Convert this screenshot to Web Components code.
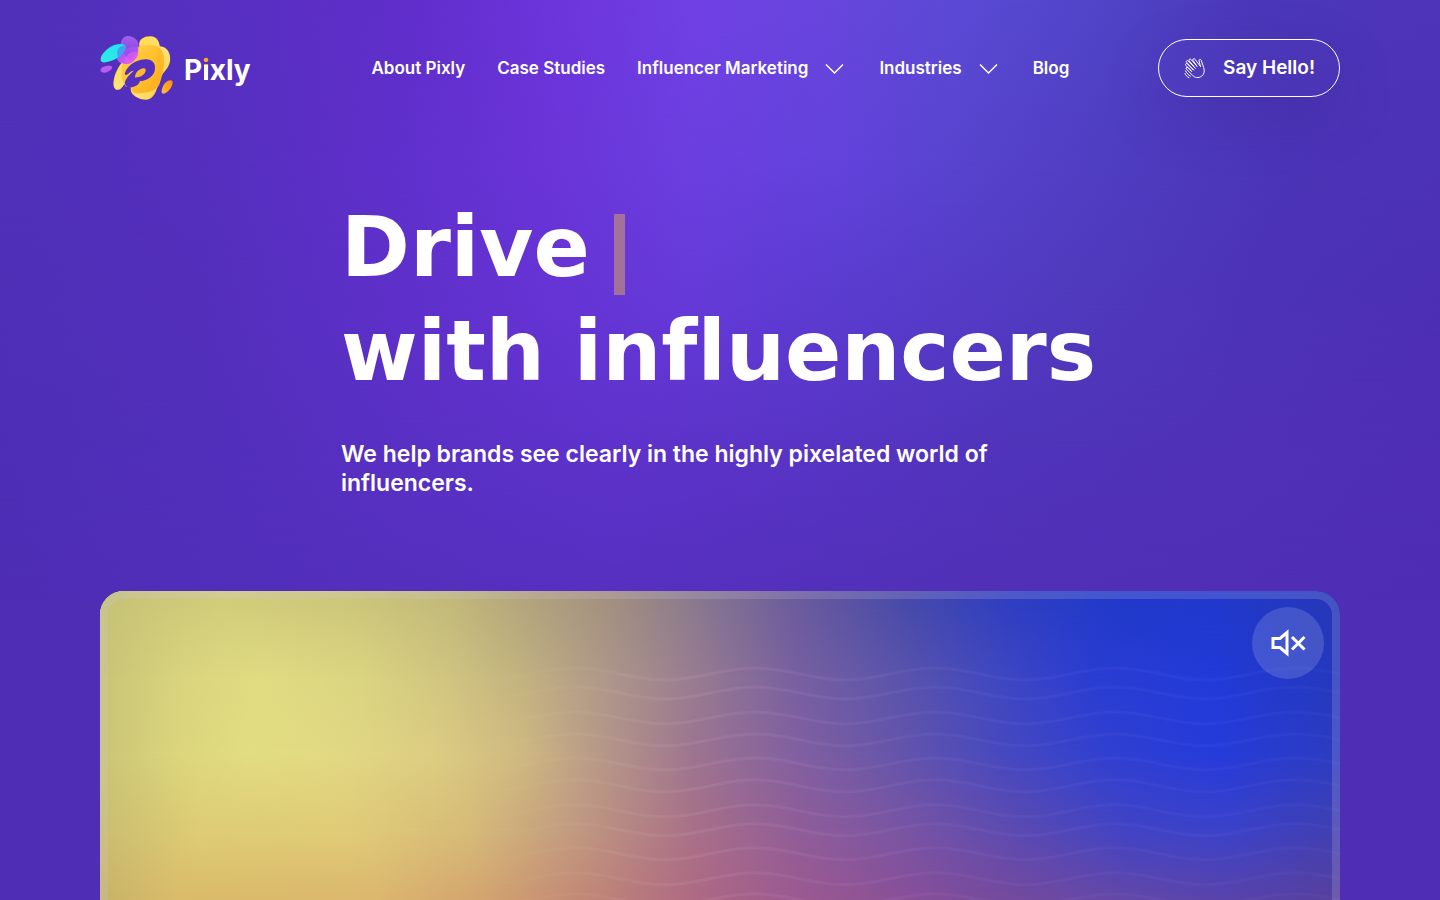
<!DOCTYPE html>
<html lang="en">
<head>
<meta charset="utf-8">
<title>Pixly</title>
<style>
    body {
        margin: 0;
        background: #4f2db5;
        color: #fff;
        font-family: Inter, "Liberation Sans", sans-serif;
    }
</style>
</head>
<body>
<pix-page>
    <pix-header slot="header">
        <pix-logo slot="logo">P<i>i</i>xly</pix-logo>
        <pix-link href="#about">About Pixly</pix-link>
        <pix-link href="#cases">Case Studies</pix-link>
        <pix-link href="#marketing" menu>Influencer Marketing</pix-link>
        <pix-link href="#industries" menu>Industries</pix-link>
        <pix-link href="#blog">Blog</pix-link>
        <pix-hello slot="action">Say Hello!</pix-hello>
    </pix-header>
    <pix-hero>
        <span slot="first">Drive</span>
        <span slot="second">with influencers</span>
        <span slot="text">We help brands see clearly in the highly pixelated world of influencers.</span>
    </pix-hero>
    <pix-video></pix-video>
</pix-page>

<script>
// smooth two-way gradient: every row is a horizontal gradient that fades into the next one
class PixMesh extends HTMLElement {
    constructor() {
        super();
        this.attachShadow({mode: 'open'});
    }

    set rows(rows) {
        const layers = rows.map((row, i) => {
            const next = rows[i + 1];
            const mask = next ? `linear-gradient(to bottom, #000 ${row.y}%, transparent ${next.y}%)` : 'none';
            return `<div style="background: linear-gradient(to right, ${row.stops}); mask-image: ${mask}"></div>`;
        }).reverse();
        this.shadowRoot.innerHTML = `
            <style>
                :host { display: grid; isolation: isolate; }
                div { grid-area: 1 / 1; }
            </style>
            ${layers.join('')}
        `;
    }
}

class PixPage extends HTMLElement {
    constructor() {
        super();
        this.attachShadow({mode: 'open'});
    }

    connectedCallback() {
        this.shadowRoot.innerHTML = `
            <style>
                :host { display: block; position: relative; overflow: hidden; }
                pix-mesh { position: absolute; z-index: -1; top: 0; left: 0; width: 100%; height: 600px; }
                .wrap { padding: 36px 100px 100px; }
            </style>
            <pix-mesh></pix-mesh>
            <div class="wrap">
                <slot name="header"></slot>
                <main><slot></slot></main>
            </div>
        `;
        this.shadowRoot.querySelector('pix-mesh').rows = [
            {y: 0, stops: '#5030b8, #5630c0 14%, #602eca 28%, #6c34da 38%, #7040e4 48%, #6845dc 57%, #5a4ad4 67%, #5145c8 76%, #4a38b8 87%, #4e34b8'},
            {y: 25, stops: '#4f30b8, #552fbe 14%, #6030cc 28%, #6a34d8 38%, #6c3fe0 48%, #6343dc 58%, #5744ce 67%, #4e3dc0 78%, #4b34b6 90%, #4c32b6'},
            {y: 50, stops: '#4f2fb7, #532fbb 14%, #5e30ca 28%, #6633d4 38%, #653ad8 48%, #593cce 60%, #503abe 74%, #4c32b6 88%, #4c2fb4'},
            {y: 75, stops: '#4e2eb6, #512fba 14%, #5930c4 28%, #5e32cb 43%, #5834c5 56%, #4f34ba 70%, #4f2eb4'},
            {y: 100, stops: '#4f2db5, #522fbb 20%, #5630c0 42%, #5230b8 62%, #4f2db5'}
        ];
    }
}

class PixHeader extends HTMLElement {
    constructor() {
        super();
        this.attachShadow({mode: 'open'});
        this.shadowRoot.innerHTML = `
            <style>
                :host { display: block; }
                header { display: flex; align-items: center; justify-content: space-between; min-height: 64px; }
                nav { display: flex; align-items: center; gap: 32px; padding-left: 32px; }
            </style>
            <header>
                <slot name="logo"></slot>
                <nav aria-label="Main"><slot></slot></nav>
                <slot name="action"></slot>
            </header>
        `;
    }
}

class PixLogo extends HTMLElement {
    constructor() {
        super();
        this.attachShadow({mode: 'open'});
        this.shadowRoot.innerHTML = `
            <style>
                :host { display: block; }
                a { display: flex; align-items: center; gap: 10px; color: #fff; text-decoration: none; }
                svg { display: block; width: 74px; height: 64px; }
                span { padding-top: 3px; font-size: 28px; font-weight: 700; font-optical-sizing: none; line-height: 32px; }
                /* only the dot of the i is orange */
                ::slotted(i) {
                    font-style: normal;
                    color: transparent;
                    background: linear-gradient(#ffa928 36%, #fff 36%);
                    background-clip: text;
                    -webkit-background-clip: text;
                }
            </style>
            <a href="#home">
                <svg viewBox="29 32 222 193" aria-hidden="true">
                    <defs>
                        <linearGradient id="pale" x1="0" y1="0" x2="1" y2="1"><stop offset="0" stop-color="#ffd83c"/><stop offset=".55" stop-color="#ffe27a"/><stop offset="1" stop-color="#ffc21e"/></linearGradient>
                        <linearGradient id="gold" x1="0" y1="0" x2="1" y2="1"><stop offset="0" stop-color="#ffd54a"/><stop offset=".5" stop-color="#ffc02e"/><stop offset="1" stop-color="#ffae1e"/></linearGradient>
                        <linearGradient id="violet" x1="0" y1="0" x2="0" y2="1"><stop offset="0" stop-color="#b56cf5"/><stop offset="1" stop-color="#8f3bea"/></linearGradient>
                        <linearGradient id="pink" x1="0" y1="0" x2="1" y2="1"><stop offset="0" stop-color="#8b52f0"/><stop offset="1" stop-color="#e95cf4"/></linearGradient>
                        <linearGradient id="cyan" x1="0" y1="1" x2="1" y2="0"><stop offset="0" stop-color="#2af0e0"/><stop offset="1" stop-color="#25dff5"/></linearGradient>
                        <linearGradient id="drop" x1="1" y1="0" x2="0" y2="1"><stop offset="0" stop-color="#ff8a14"/><stop offset="1" stop-color="#ffc12e"/></linearGradient>
                    </defs>
                    <path fill="url(#pale)" d="M147 62C143 42 162 32 182 33C199 34 206 46 209 63C233 66 241 84 240 104C238 130 217 140 211 158C201 188 194 224 168 224C145 224 119 209 121 190C123 175 150 160 150 130Z"/>
                    <path fill="url(#pale)" d="M101 104C84 122 72 145 69 172C68 189 76 198 88 193C102 186 101 168 121 158L140 120Z"/>
                    <path fill="url(#gold)" d="M98 113C112 82 132 63 163 60C192 57 218 62 221 94C225 125 215 154 209 174C202 196 179 201 153 205C134 207 122 201 123 187L106 184C94 170 88 142 98 113Z"/>
                    <path fill="#ff9f1c" opacity=".18" d="M209 63C217 94 212 140 211 158C201 188 186 200 170 202C195 160 205 110 202 61Z"/>
                    <path fill="#5530be" d="M103 146C110 116 146 100 170 102C191 104 198 121 193 138C187 156 168 167 149 168C146 180 132 187 119 187C106 187 100 178 106 165C113 151 124 143 131 136C124 137 119 141 115 145C110 150 103 151 103 146Z"/>
                    <path fill="#ffb92a" d="M134 157C134 143 145 133 156 130C166 127 169 134 164 143C158 152 146 158 134 157Z"/>
                    <path fill="url(#pink)" d="M80 100C80 78 101 72 118 68C135 59 145 70 144 80C142 98 127 115 112 116C97 117 82 113 80 100Z"/>
                    <path fill="url(#violet)" opacity=".8" d="M91 56C92 40 103 32 114 32C131 33 144 45 145 60C146 78 133 94 118 104C107 98 94 78 91 56Z"/>
                    <path fill="#e060f4" opacity=".7" d="M106 96C114 82 130 76 143 80C143 98 127 115 112 116C100 116 101 106 106 96Z"/>
                    <path fill="url(#cyan)" d="M31 107C26 91 50 67 72 59C88 54 106 54 106 66C104 80 87 99 65 106C50 111 35 116 31 107Z"/>
                    <path fill="#4b8cf6" opacity=".75" d="M81 76C84 66 98 58 105 62C109 74 98 88 83 98C80 91 79 84 81 76Z"/>
                    <path fill="#b95cf0" d="M30 136C29 127 43 122 56 122C66 122 68 127 61 134C51 144 33 146 30 136Z"/>
                    <path fill="url(#drop)" d="M217 187C222 173 235 163 244 166C251 169 246 183 240 191C232 202 219 211 215 203C213 199 215 193 217 187Z"/>
                </svg>
                <span><slot></slot></span>
            </a>
        `;
    }
}

class PixLink extends HTMLElement {
    constructor() {
        super();
        this.attachShadow({mode: 'open'});
    }

    connectedCallback() {
        const chevron = `<svg viewBox="0 0 25 24" aria-hidden="true"><path d="M4 8.500l8.500 8.500L21 8.500" fill="none" stroke="#fff" stroke-width="1.500"/></svg>`;
        this.shadowRoot.innerHTML = `
            <style>
                :host { display: block; }
                a {
                    display: flex;
                    align-items: center;
                    gap: 14px;
                    color: #fff;
                    font-size: 17px;
                    font-weight: 600;
                    line-height: 24px;
                    text-decoration: none;
                    white-space: nowrap;
                }
                svg { width: 25px; height: 24px; }
            </style>
            <a href="${this.getAttribute('href')}"><slot></slot>${this.hasAttribute('menu') ? chevron : ''}</a>
        `;
    }
}

class PixHello extends HTMLElement {
    constructor() {
        super();
        this.attachShadow({mode: 'open'});
        this.shadowRoot.innerHTML = `
            <style>
                :host { display: block; }
                button {
                    display: flex;
                    align-items: center;
                    gap: 16px;
                    min-height: 58px;
                    padding: 0 24px;
                    border: 1px solid #fff;
                    border-radius: 29px;
                    background: transparent;
                    box-shadow: 0 20px 60px rgba(55, 30, 130, .2);
                    color: #fff;
                    font: 600 19px/24px Inter, "Liberation Sans", sans-serif;
                    white-space: nowrap;
                }
                svg { width: 24px; height: 24px; }
            </style>
            <button type="button">
                <svg viewBox="0 0 24 24" fill="none" stroke="#fff" stroke-linecap="round" stroke-linejoin="round" aria-hidden="true">
                    <path d="M17.500 10.500L16 4.800c-.3-1.400 1.600-2 2.200-.6l2.500 7.300c1.200 3.700.5 6.800-2.200 8.800-3 2-6.600 1.500-9-1L3.300 13c-.9-1.200.5-2.300 1.500-1.400l3.700 3.600"/>
                    <path d="M8.500 15.200L2.800 9.300c-.9-1.200.5-2.400 1.600-1.400l6 6"/>
                    <path d="M10.400 13.900L3.600 6.300c-.9-1.200.6-2.400 1.700-1.300l6.900 7.200"/>
                    <path d="M12.200 12.200L6.200 4.800C5.400 3.500 7 2.300 8.100 3.500l5.800 6.700"/>
                    <path d="M13.900 10.200L10 4.300c-.7-1.300.9-2.300 1.900-1.100l5.600 7.300"/>
                    <path d="M2 17.500c.8 2 2 3.300 4 4.200M2.500 14.800c1.200 2.500 2.800 4.200 5 5.400"/>
                </svg>
                <slot></slot>
            </button>
        `;
    }
}

class PixHero extends HTMLElement {
    constructor() {
        super();
        this.attachShadow({mode: 'open'});
        this.shadowRoot.innerHTML = `
            <style>
                :host { display: block; max-width: 758px; margin: 96px auto 93px; }
                h1 {
                    margin: 0;
                    font-family: "DejaVu Sans", Inter, sans-serif;
                    font-size: 83px;
                    font-weight: 700;
                    font-variant-ligatures: none;
                    line-height: 104px;
                    white-space: nowrap;
                }
                .line { display: flex; align-items: center; gap: 24px; }
                .cursor { width: 11px; height: 81px; margin-top: 12px; background: #ffc83c; opacity: .4; }
                p {
                    max-width: 680px;
                    margin: 36px 0 0;
                    font-size: 23px;
                    font-weight: 600;
                    line-height: 29px;
                }
            </style>
            <h1>
                <span class="line"><slot name="first"></slot><span class="cursor"></span></span>
                <span class="line"><slot name="second"></slot></span>
            </h1>
            <p><slot name="text"></slot></p>
        `;
    }
}

class PixVideo extends HTMLElement {
    constructor() {
        super();
        this.attachShadow({mode: 'open'});
    }

    connectedCallback() {
        this.shadowRoot.innerHTML = `
            <style>
                :host {
                    display: grid;
                    position: relative;
                    aspect-ratio: 16 / 9;
                    border-radius: 24px;
                    overflow: hidden;
                }
                pix-mesh, .waves, .frame { grid-area: 1 / 1; }
                .waves, .frame { z-index: 1; }
                .waves { width: 100%; height: 100%; }
                .frame { border: 8px solid rgba(205, 200, 230, .2); border-radius: 24px; }
                button {
                    position: absolute;
                    z-index: 2;
                    top: 16px;
                    right: 16px;
                    display: grid;
                    place-items: center;
                    width: 72px;
                    height: 72px;
                    padding: 0;
                    border: 0;
                    border-radius: 50%;
                    background: rgba(255, 255, 255, .15);
                }
                button svg { width: 36px; height: 36px; }
            </style>
            <pix-mesh></pix-mesh>
            <svg class="waves" viewBox="0 0 1240 698" preserveAspectRatio="none" fill="none" stroke="url(#fade)" stroke-width="3" aria-hidden="true">
                <linearGradient id="fade" gradientUnits="userSpaceOnUse" x1="0" y1="0" x2="1240" y2="0">
                    <stop offset=".3" stop-color="#fff" stop-opacity="0"/>
                    <stop offset=".48" stop-color="#ffd0e8" stop-opacity=".08"/>
                    <stop offset=".7" stop-color="#b8a8ff" stop-opacity=".06"/>
                    <stop offset="1" stop-color="#a0a8ff" stop-opacity=".04"/>
                </linearGradient>
                ${this.waves()}
            </svg>
            <div class="frame"></div>
            <button type="button" aria-label="Unmute">
                <svg viewBox="0 0 36 36" fill="none" stroke="#fff" stroke-width="3" aria-hidden="true">
                    <path d="M3 13.500h7l7-6v21l-7-6H3z"/>
                    <path d="M22 12l12.500 12.500M34.500 12L22 24.500"/>
                </svg>
            </button>
        `;
        this.shadowRoot.querySelector('pix-mesh').rows = [
            {y: 2, stops: '#c6c277, #cdc878 5%, #d2cd7a 10%, #cdc77a 20%, #c3ba7a 28%, #b4a67c 34%, #a49080 41%, #8a798e 48%, #6c5c9c 56%, #484aaa 65%, #303fc0 73%, #2139ca 82%, #2038cc 90%, #2638b8'},
            {y: 12, stops: '#c9c476, #dad57e 7%, #e0db82 13%, #dad480 21%, #d0c480 28%, #c2b280 34%, #ad968a 41%, #987c90 48%, #7860a0 56%, #5853ac 65%, #3e46c2 73%, #2a3dd2 80%, #223ad8 90%, #2438bc'},
            {y: 23, stops: '#c9c476, #dbd57d 6%, #e2dd82 12%, #e2da83 18%, #dccd82 27%, #cfb981 34%, #b89a88 40%, #9c7490 48%, #8260a0 56%, #6254ac 65%, #4648c0 73%, #3040d0 81%, #253bdb 90%, #2c3cc0'},
            {y: 34, stops: '#cabe70, #decd76 8%, #e0cc78 20%, #d6bb78 30%, #c29b80 38%, #a87088 48%, #905e98 56%, #7854a4 65%, #5a4ab2 74%, #4043c6 83%, #3a42ca 91%, #403fb2'},
            {y: 44, stops: '#c8b368, #dabc6a 6%, #dcb86e 22%, #d3a470 31%, #bf8578 40%, #ae6a84 48%, #9c5a90 56%, #885098 65%, #744a9e 73%, #6047aa 84%, #5843ac 91%, #56409e'}
        ];
    }

    waves() {
        const rows = [77, 96, 121, 143, 167, 189, 214, 233, 257, 282, 303, 326, 349, 372, 395];
        return rows.map(y => {
            let d = `M115 ${y}`;
            for (let x = 115; x < 1240; x += 90) {
                const to = (x - 115) % 180 ? y : y + 12;
                const from = (x - 115) % 180 ? y + 12 : y;
                d += `C${x + 35} ${from} ${x + 55} ${to} ${x + 90} ${to}`;
            }
            return `<path d="${d}"/>`;
        }).join('');
    }
}

window.customElements.define('pix-mesh', PixMesh);
window.customElements.define('pix-page', PixPage);
window.customElements.define('pix-header', PixHeader);
window.customElements.define('pix-logo', PixLogo);
window.customElements.define('pix-link', PixLink);
window.customElements.define('pix-hello', PixHello);
window.customElements.define('pix-hero', PixHero);
window.customElements.define('pix-video', PixVideo);
</script>
</body>
</html>
